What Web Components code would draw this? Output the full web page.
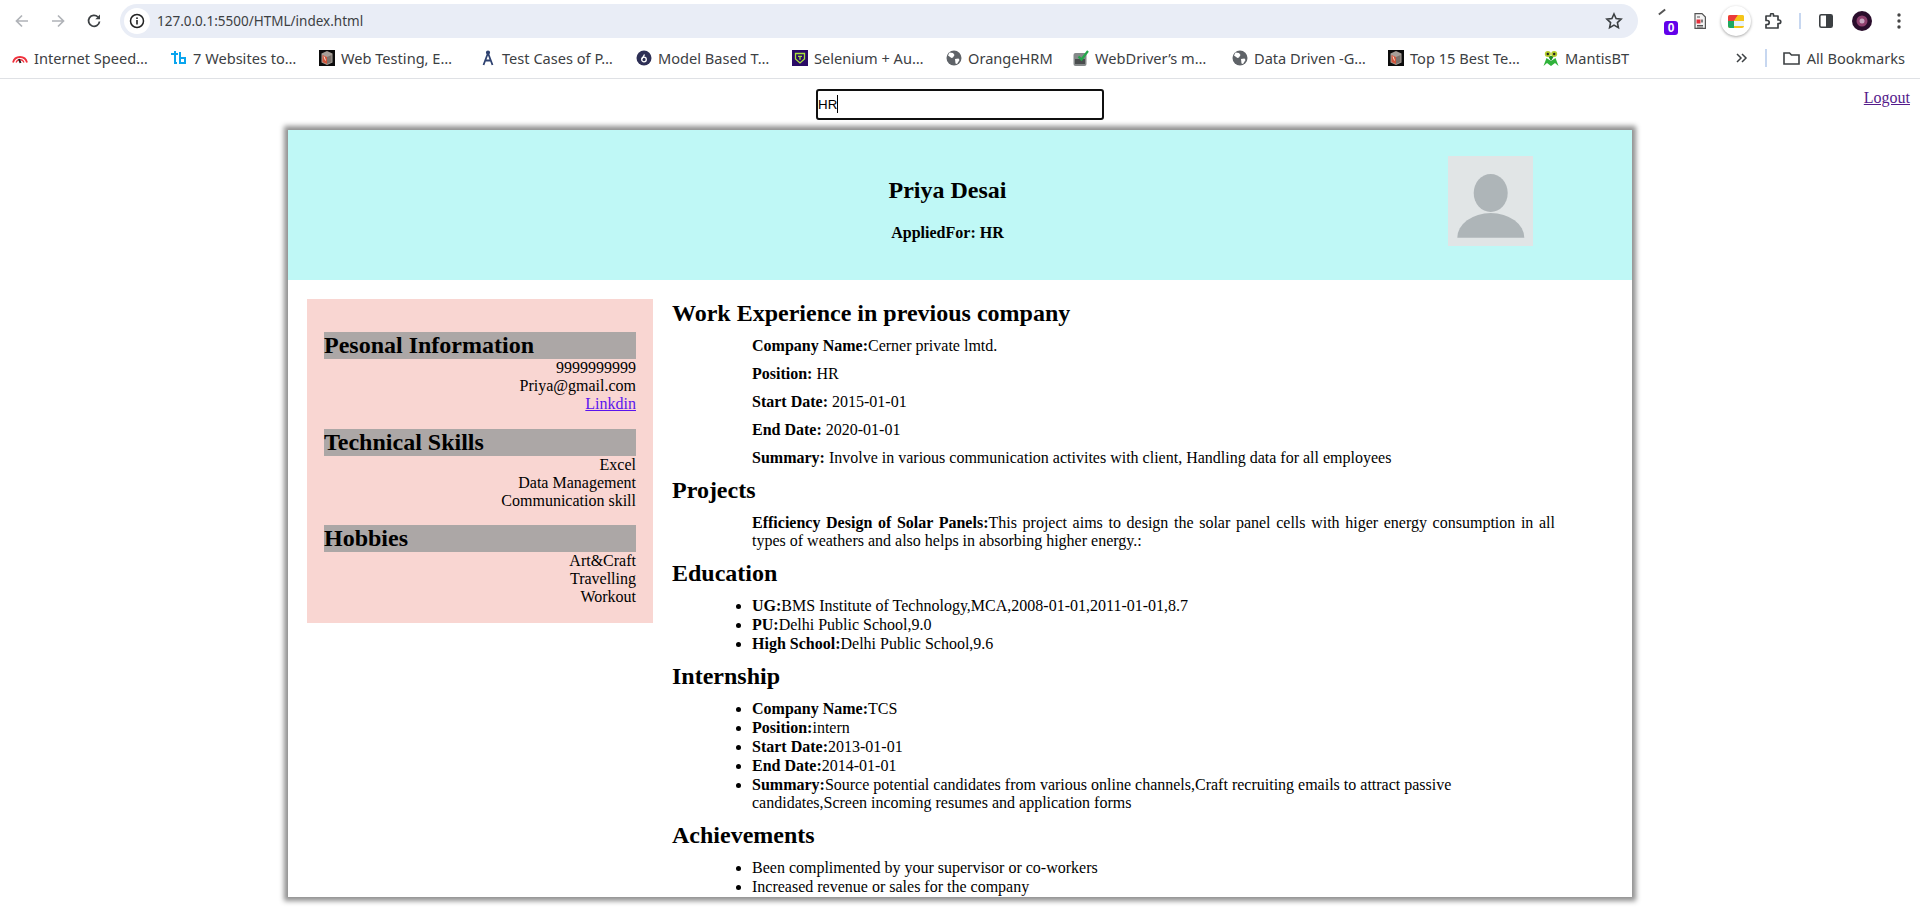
<!DOCTYPE html>
<html lang="en">
<head>
<meta charset="utf-8">
<title>Resume</title>
<style>
  html, body { margin: 0; height: 912px; overflow: hidden; background: #fff; font-family: "Liberation Serif", serif; }
</style>
</head>
<body>
<browser-bar></browser-bar>
<resume-page>
  <resume-sidebar slot="side">
    <side-section heading="Pesonal Information"><div>9999999999</div><div>Priya@gmail.com</div><div><a href="#" style="color:#5a14ee">Linkdin</a></div></side-section>
    <side-section heading="Technical Skills"><div>Excel</div><div>Data Management</div><div>Communication skill</div></side-section>
    <side-section heading="Hobbies"><div>Art&amp;Craft</div><div>Travelling</div><div>Workout</div></side-section>
  </resume-sidebar>
  <main-section heading="Work Experience in previous company">
    <info-line><b>Company Name:</b>Cerner private lmtd.</info-line>
    <info-line><b>Position: </b>HR</info-line>
    <info-line><b>Start Date: </b>2015-01-01</info-line>
    <info-line><b>End Date: </b>2020-01-01</info-line>
    <info-line><b>Summary: </b>Involve in various communication activites with client, Handling data for all employees</info-line>
  </main-section>
  <main-section heading="Projects">
    <info-line><b>Efficiency Design of Solar Panels:</b>This project aims to design the solar panel cells with higer energy consumption in all types of weathers and also helps in absorbing higher energy.:</info-line>
  </main-section>
  <main-section heading="Education">
    <bullet-list>
      <li><b>UG:</b>BMS Institute of Technology,MCA,2008-01-01,2011-01-01,8.7</li>
      <li><b>PU:</b>Delhi Public School,9.0</li>
      <li><b>High School:</b>Delhi Public School,9.6</li>
    </bullet-list>
  </main-section>
  <main-section heading="Internship">
    <bullet-list>
      <li><b>Company Name:</b>TCS</li>
      <li><b>Position:</b>intern</li>
      <li><b>Start Date:</b>2013-01-01</li>
      <li><b>End Date:</b>2014-01-01</li>
      <li><b>Summary:</b>Source potential candidates from various online channels,Craft recruiting emails to attract passive candidates,Screen incoming resumes and application forms</li>
    </bullet-list>
  </main-section>
  <main-section heading="Achievements">
    <bullet-list>
      <li>Been complimented by your supervisor or co-workers</li>
      <li>Increased revenue or sales for the company</li>
    </bullet-list>
  </main-section>
</resume-page>

<script>
//browser chrome on top of the page
class BrowserBar extends HTMLElement{
    constructor(){
        super();
        const globe = `<svg width="16" height="16" viewBox="0 0 16 16"><circle cx="8" cy="8" r="7.500" fill="#5f6368"/><path d="M3.500 2.500l3.500.5 1.500 2-1.500 2.500-1.500.5-3.500-2.500zM9 9l3.500-.5 1 1.500-2.500 4-1.500-.5z" fill="#fff"/></svg>`;
        const book = `<svg width="16" height="16" viewBox="0 0 16 16"><rect width="16" height="16" fill="#0c0c0c"/><path d="M8 1l5.500 2.500v9L8 15l-5.500-2.500v-9z" fill="#a79f98"/><path d="M3.500 5L8 7v7l-4.500-2z" fill="#d2553a"/><path d="M5 6.500l1.500 4" stroke="#f3e3d8" stroke-width="1"/><path d="M8 7l4.500-2v7L8 14z" fill="#7b726c"/></svg>`;
        const marks = [
            [159, 'Internet Speed…', `<svg width="16" height="16" viewBox="0 0 16 16" fill="none" stroke="#f0303c"><path stroke-width="1.800" d="M1 12.500a7.200 7.200 0 0 1 14 0"/><path stroke-width="1.200" d="M4 12.500a4.200 4.200 0 0 1 8 0"/><path stroke="#222" stroke-width="2" d="M7 9l1.500 4"/></svg>`],
            [148, '7 Websites to…', `<svg width="16" height="16" viewBox="0 0 16 16" fill="none" stroke="#0aa5ee" stroke-width="2"><path d="M0 4h7M4 1v2M4 4v9h2M9 2v11h5V8H9"/></svg>`],
            [161, 'Web Testing, E…', book],
            [156, 'Test Cases of P…', `<svg width="16" height="16" viewBox="0 0 16 16" fill="none" stroke="#2f4270" stroke-width="1.800"><path d="M8 3L3.500 15M8 3l4.500 12M5.500 10.500h5"/><circle cx="8" cy="2.500" r="1.200" fill="#2f4270"/></svg>`],
            [156, 'Model Based T…', `<svg width="16" height="16" viewBox="0 0 16 16"><circle cx="8" cy="8" r="7.500" fill="#2d2f55"/><circle cx="8" cy="9.500" r="2.300" fill="none" stroke="#fff" stroke-width="1.300"/><path d="M6 9l2.500-4.500" stroke="#fff" stroke-width="1.300"/></svg>`],
            [154, 'Selenium + Au…', `<svg width="16" height="16" viewBox="0 0 16 16"><rect width="16" height="16" fill="#2a0a66"/><path d="M3.500 3.500h9v5.500L8 13 3.500 9z" fill="none" stroke="#a8e23c" stroke-width="1.300"/><path d="M6 6.300h4M8 6.300v3.500" stroke="#a8e23c" stroke-width="1.300"/></svg>`],
            [127, 'OrangeHRM', globe],
            [159, 'WebDriver’s m…', `<svg width="16" height="16" viewBox="0 0 16 16"><rect x="0.500" y="3" width="13" height="13" rx="2" fill="#85898a"/><rect x="2" y="9" width="10" height="5" fill="#4a4d4e"/><path d="M5.500 6.500l3 3L15 1" fill="none" stroke="#23a84a" stroke-width="2.200"/></svg>`],
            [156, 'Data Driven -G…', globe],
            [155, 'Top 15 Best Te…', book],
            [0, 'MantisBT', `<svg width="16" height="16" viewBox="0 0 16 16"><path d="M0.500 16l3-8 4.500 3 4.500-3 3 8-3.500-3L8 16l-4-3z" fill="#2fb23a"/><path d="M5 6h6l-3 5z" fill="#1d8a2c"/><circle cx="4.800" cy="4" r="3" fill="#b5cc2c"/><circle cx="11.200" cy="4" r="3" fill="#b5cc2c"/><circle cx="4.800" cy="4" r="1.200" fill="#222"/><circle cx="11.200" cy="4" r="1.200" fill="#222"/></svg>`]
        ];
        const items = marks.map(m => `<span class="mark" style="${m[0] ? 'width:' + m[0] + 'px' : ''}">${m[2]}<span>${m[1]}</span></span>`).join('');
        this.attachShadow({mode: 'open'}).innerHTML = `
        <style>
            :host{ display: block; height: 78px; border-bottom: 1px solid #dfe1e5; margin-bottom: 1px; background: #fff;
                   font-family: "Noto Sans", sans-serif; color: #3c4043; }
            .tools{ height: 42px; display: flex; align-items: flex-start; padding-top: 4px; box-sizing: border-box; }
            .nav{ width: 36px; height: 34px; display: flex; align-items: center; justify-content: center; flex: none; }
            .nav:first-child{ margin-left: 4px; }
            .omni{ margin-left: 8px; width: 1518px; height: 34px; background: #e9edf6; border-radius: 17px; display: flex; align-items: center; flex: none; box-sizing: border-box; padding: 0 15px 0 4px; font-size: 13.5px; }
            .info{ width: 26px; height: 26px; background: #fff; border-radius: 50%; display: flex; align-items: center; justify-content: center; margin-right: 7px; }
            .omni .url{ flex: 1; color: #3c4043; }
            .exts{ display: flex; align-items: center; height: 34px; margin-left: 20px; flex: none; }
            .count{ position: relative; width: 20px; height: 34px; margin-right: 16px; flex: none; }
            .count i{ position: absolute; left: 0; top: 7px; width: 8px; height: 2px; background: #555; transform: rotate(-38deg); }
            .count b{ position: absolute; left: 6px; top: 17px; width: 14px; height: 14px; border-radius: 3px; background: #6200ea; color: #fff; font: bold 12px/14px "Liberation Sans", sans-serif; text-align: center; }
            .round{ width: 30px; height: 30px; border-radius: 50%; background: #fff; box-shadow: 0 1px 3px rgba(0,0,0,.35); display: flex; align-items: center; justify-content: center; margin: 0 14px 0 15px; flex: none; }
            .vsep{ width: 2px; height: 16px; background: #c7d7f0; margin: 0 18px 0 16px; flex: none; }
            .marks{ height: 31px; display: flex; align-items: center; padding-left: 12px; font-size: 14.6px; white-space: nowrap; }
            .mark{ display: flex; align-items: center; gap: 6px; flex: none; }
            .mark svg{ flex: none; }
            .end{ margin-left: auto; display: flex; align-items: center; padding-right: 15px; }
            .sep{ width: 2px; height: 18px; background: #c7d7f0; }
        </style>
        <div class="tools">
            <span class="nav"><svg width="16" height="16" viewBox="0 0 16 16" fill="none" stroke="#b0b3b8" stroke-width="1.700"><path d="M14 8H2.500M8 2.500L2.500 8 8 13.500"/></svg></span>
            <span class="nav"><svg width="16" height="16" viewBox="0 0 16 16" fill="none" stroke="#b0b3b8" stroke-width="1.700"><path d="M2 8h11.500M8 2.500L13.500 8 8 13.500"/></svg></span>
            <span class="nav"><svg width="16" height="16" viewBox="0 0 16 16" fill="none" stroke="#3c4043" stroke-width="1.800"><path d="M13.500 8.500A5.500 5.500 0 1 1 12 4"/><path d="M14 1.500v4.700H9.300z" fill="#3c4043" stroke="none"/></svg></span>
            <div class="omni">
                <span class="info"><svg width="16" height="16" viewBox="0 0 16 16"><circle cx="8" cy="8" r="6.500" fill="none" stroke="#222" stroke-width="1.500"/><rect x="7.200" y="7" width="1.600" height="4.500" fill="#222"/><rect x="7.200" y="4.400" width="1.600" height="1.600" fill="#222"/></svg></span>
                <span class="url">127.0.0.1:5500/HTML/index.html</span>
                <svg width="18" height="18" viewBox="0 0 18 18" fill="none" stroke="#3c4043" stroke-width="1.600"><path d="M9 2l2.100 4.600 5 .6-3.700 3.400 1 5L9 13.100 4.600 15.600l1-5L1.900 7.200l5-.6z"/></svg>
            </div>
            <div class="exts">
                <span class="count"><i></i><b>0</b></span>
                <svg width="12" height="16" viewBox="0 0 12 16" fill="none" stroke="#555" stroke-width="1.200" style="flex:none"><path d="M1 .6h7l3.400 3.400v11.400H1z" fill="#f4f4f4"/><path d="M3 4h3M3 12.500h6M3 14h6" stroke-width="1"/><rect x="2.500" y="6.500" width="4" height="4" fill="#e5303a" stroke="none"/><path d="M8 6.500v3" stroke-width="1.500"/></svg>
                <span class="round"><svg width="16" height="13" viewBox="0 0 16 13"><rect width="16" height="13" rx="2" fill="#f5c518"/><path d="M0 2a2 2 0 0 1 2-2h8L6 6H0z" fill="#ea3b3b"/><path d="M0 6h6v7H2a2 2 0 0 1-2-2z" fill="#1fa861"/><path d="M10 0h4a2 2 0 0 1 2 2v4H6z" fill="#f5c518"/><rect x="6" y="6" width="10" height="5" fill="#e9f3fb"/></svg></span>
                <svg width="18" height="16" viewBox="0 0 18 16" fill="none" stroke="#3c4043" stroke-width="1.700" style="flex:none"><path d="M1 3h4.500V2a1.500 1.500 0 0 1 3 0v1H13v4h1a1.500 1.500 0 0 1 0 3.500h-1V15H1v-3.500h1.200a2 2 0 0 0 0-4H1z" stroke-linejoin="round"/></svg>
                <span class="vsep"></span>
                <svg width="14" height="14" viewBox="0 0 14 14" style="flex:none"><rect x=".8" y=".8" width="12.400" height="12.400" rx="1.500" fill="#fff" stroke="#3c4043" stroke-width="1.600"/><rect x="7" y="1" width="6" height="12" fill="#3c4043"/></svg>
                <svg width="20" height="20" viewBox="0 0 20 20" style="flex:none;margin-left:19px"><circle cx="10" cy="10" r="10" fill="#2a0d2c"/><circle cx="10" cy="10" r="5.500" fill="#8e3f6e"/><circle cx="10" cy="10" r="2.500" fill="#c7a6c0"/></svg>
                <svg width="4" height="16" viewBox="0 0 4 16" fill="#444" style="flex:none;margin-left:25px"><circle cx="2" cy="2" r="1.700"/><circle cx="2" cy="8" r="1.700"/><circle cx="2" cy="14" r="1.700"/></svg>
            </div>
        </div>
        <div class="marks">${items}
            <span class="end">
                <svg width="14" height="14" viewBox="0 0 14 14" fill="none" stroke="#3c4043" stroke-width="1.500" style="margin-right:17px"><path d="M3 3l4 4-4 4M8 3l4 4-4 4"/></svg>
                <span class="sep" style="margin-right:16px"></span>
                <svg width="17" height="16" viewBox="0 0 17 16" fill="none" stroke="#3c4043" stroke-width="1.600" style="margin-right:7px"><path d="M1 3h5.500l2 2H16v9H1z"/></svg>
                <span>All Bookmarks</span>
            </span>
        </div>`;
    }
}

//page body: search box, logout and the resume card
class ResumePage extends HTMLElement{
    constructor(){
        super();
        this.attachShadow({mode: 'open'}).innerHTML = `
        <style>
            :host{ display: block; height: 832px; font-size: 16px; color: #000; }
            a{ color: #551a8b; }
            .top{ height: 50px; display: flex; justify-content: center; position: relative; padding-top: 9px; box-sizing: border-box; }
            .box{ position: relative; width: 288px; height: 31px; }
            .caret{ position: absolute; left: 21px; top: 6px; width: 1px; height: 18px; background: #000; }
            input{ width: 288px; height: 31px; box-sizing: border-box; border: 2px solid #101010; border-radius: 3px; outline: none; padding: 0; font: 13.33px "Liberation Sans", sans-serif; caret-color: transparent; }
            .logout{ position: absolute; right: 10px; top: 9px; }
            .card{ width: 1344px; height: 767px; margin-left: 288px; box-shadow: 0 0 5px 4px #909090; overflow: hidden; background: #fff; }
            .body{ display: flex; align-items: flex-start; padding-top: 19px; }
            .main{ width: 883px; margin-left: 19px; padding-top: 1px; }
        </style>
        <div class="top">
            <div class="box"><input value="HR"><span class="caret"></span></div>
            <a class="logout" href="#">Logout</a>
        </div>
        <div class="card">
            <resume-header name="Priya Desai" applied="AppliedFor: HR"></resume-header>
            <div class="body">
                <slot name="side"></slot>
                <div class="main"><slot></slot></div>
            </div>
        </div>`;
    }
}

class ResumeHeader extends HTMLElement{
    constructor(){
        super();
        this.attachShadow({mode: 'open'}).innerHTML = `
        <style>
            :host{ display: flex; height: 150px; background: #bff8f6; padding-left: 159px; padding-right: 99px; box-sizing: border-box; }
            .title{ flex: 1; text-align: center; padding-top: 47px; }
            h2{ margin: 0 0 20px; font-size: 24px; line-height: 27px; }
            h4{ margin: 0; font-size: 16px; line-height: 18px; }
            .pic{ width: 85px; height: 90px; margin-top: 26px; flex: none; display: block; }
        </style>
        <div class="title"><h2></h2><h4></h4></div>
        <svg class="pic" viewBox="0 0 85 90"><rect width="85" height="90" fill="#e1e5e6"/><ellipse cx="42.700" cy="37" rx="17" ry="19" fill="#aeb5b8"/><path d="M9.300 81.700a33.500 24.700 0 0 1 67 0z" fill="#aeb5b8"/></svg>`;
    }
    connectedCallback(){
        this.shadowRoot.querySelector('h2').textContent = this.getAttribute('name');
        this.shadowRoot.querySelector('h4').textContent = this.getAttribute('applied');
    }
}

class ResumeSidebar extends HTMLElement{
    constructor(){
        super();
        this.attachShadow({mode: 'open'}).innerHTML = `
        <style>
            :host{ display: block; width: 346px; height: 324px; margin-left: 19px; padding: 33px 17px 0; box-sizing: border-box; background: #f9d6d2; flex: none; }
        </style>
        <slot></slot>`;
    }
}

class SideSection extends HTMLElement{
    constructor(){
        super();
        this.attachShadow({mode: 'open'}).innerHTML = `
        <style>
            :host{ display: block; margin-bottom: 15.5px; text-align: right; line-height: 18px; }
            h2{ margin: 0; background: #aca7a6; font-size: 24px; line-height: 27px; text-align: left; }
        </style>
        <h2></h2><slot></slot>`;
    }
    connectedCallback(){
        this.shadowRoot.querySelector('h2').textContent = this.getAttribute('heading');
    }
}

class MainSection extends HTMLElement{
    constructor(){
        super();
        this.attachShadow({mode: 'open'}).innerHTML = `
        <style>
            :host{ display: block; }
            h2{ margin: 0; font-size: 24px; line-height: 27px; }
            .rest{ margin-top: 10px; }
        </style>
        <h2></h2><div class="rest"><slot></slot></div>`;
    }
    connectedCallback(){
        this.shadowRoot.querySelector('h2').textContent = this.getAttribute('heading');
    }
}

class InfoLine extends HTMLElement{
    constructor(){
        super();
        this.attachShadow({mode: 'open'}).innerHTML = `
        <style>
            :host{ display: block; margin: 0 0 10px 80px; width: 803px; line-height: 18px; text-align: justify; }
        </style>
        <slot></slot>`;
    }
}

class BulletList extends HTMLElement{
    constructor(){
        super();
        this.attachShadow({mode: 'open'}).innerHTML = `
        <style>
            :host{ display: block; width: 803px; margin: 0 0 10px 80px; line-height: 18px; }
            ::slotted(li){ display: list-item; list-style: disc; margin-bottom: 1px; }
        </style>
        <slot></slot>`;
    }
}

customElements.define('browser-bar', BrowserBar)
customElements.define('resume-page', ResumePage)
customElements.define('resume-header', ResumeHeader)
customElements.define('resume-sidebar', ResumeSidebar)
customElements.define('side-section', SideSection)
customElements.define('main-section', MainSection)
customElements.define('info-line', InfoLine)
customElements.define('bullet-list', BulletList)
</script>
</body>
</html>
